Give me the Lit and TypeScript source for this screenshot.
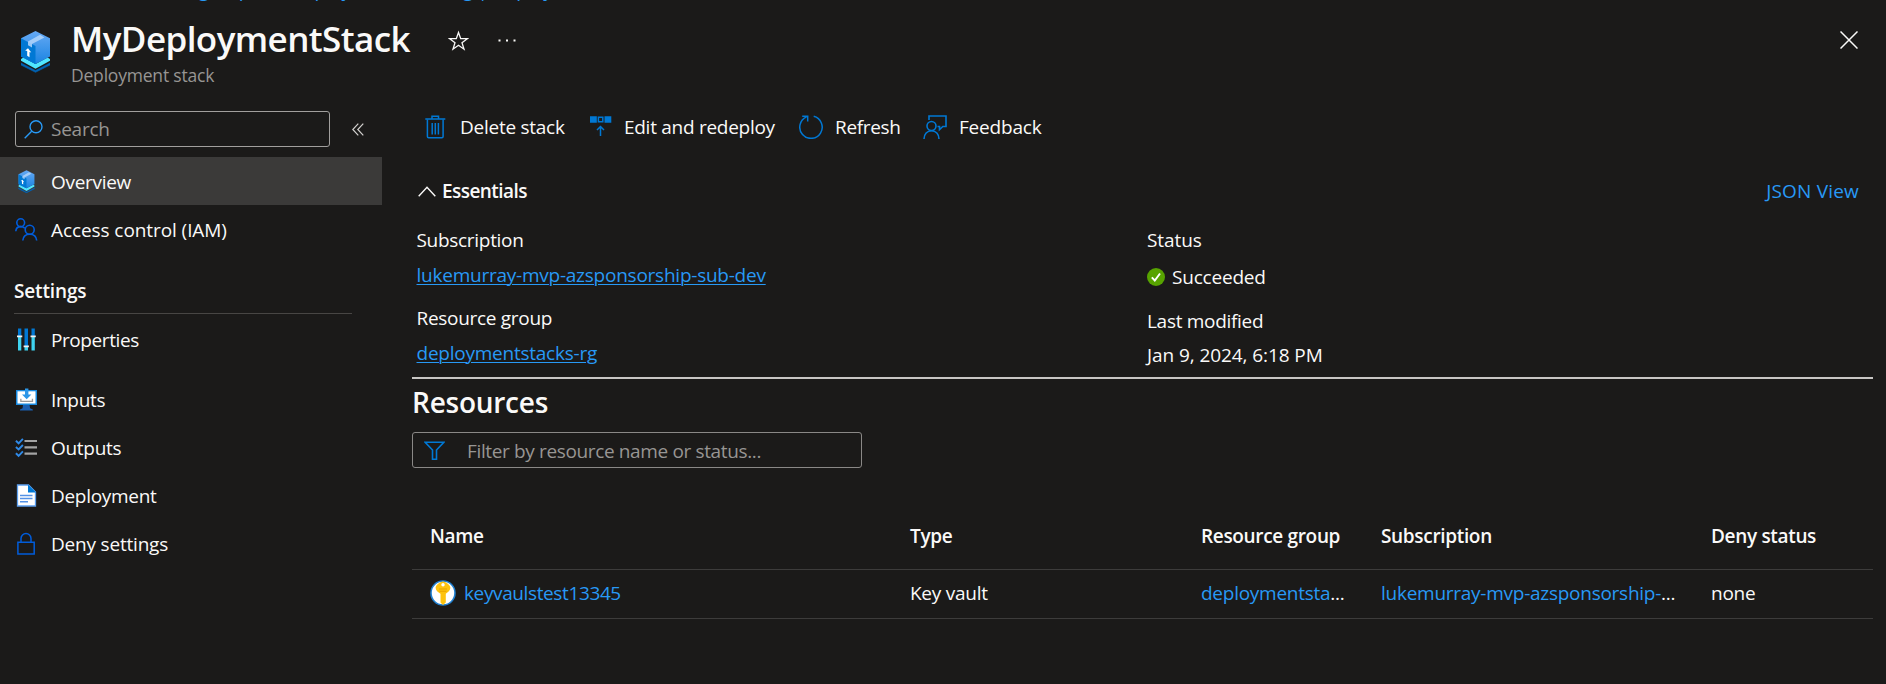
import { LitElement, html, svg, css } from "lit";
import { customElement } from "lit/decorators.js";

const stack = svg`
  <defs>
    <linearGradient id="cube" x1="0" y1="0" x2="0" y2="1"><stop offset="0" stop-color="#66a9f4"/><stop offset="1" stop-color="#1a84e2"/></linearGradient>
  </defs>
  <path d="M0 32 14.5 39.5 29 32v2L14.5 41.3 0 34z" fill="#0063b4" stroke="#0063b4" stroke-width=".6"/>
  <path d="M0 28 2.4 26.500 14.5 33 26.6 26.500 29 28v1.800L14.5 37.800 0 29.800z" fill="#50e6ff"/>
  <path d="M14.5 0 29 7.3V25.5L14.5 33 0 25.5V7.3z" fill="url(#cube)"/>
  <path d="M0 7.3 14.5 15V33L0 25.5z" fill="#0078d4"/>
  <path d="M7 10.4 19 3.8 23.4 6.4 11 13v3.4L7 14.2z" fill="#b3d5fa" opacity=".85"/>
  <path d="M7 17.2 10.3 21.6 8.5 21v5.2L6.2 24.8V20L4.2 19.6z" fill="#fff"/>`;

const icons = {
  people: svg`<g fill="none" stroke="#015cda" stroke-width="1.6"><circle cx="5.7" cy="4.7" r="3.9"/><path d="M.8 13.2C1 10.2 3 8.6 5.7 8.6c1.8 0 3.2.6 4.2 1.7"/><circle cx="14.7" cy="11.7" r="4.5"/><path d="M7.8 22.5c.3-4 3-6.3 6.9-6.3s6.7 2.300 7 6.300"/></g>`,
  sliders: svg`<path d="M3 .5h3.3v8H3zM9.5.5h3.5v17.5H9.5zM16.5.5h3.3v8h-3.3z" fill="#0078d4"/><path d="M3 8.5h3.3v14H3zM9.5 18.5h3.5v4H9.5zM16.5 8.5h3.3v14h-3.3z" fill="#3fd3ef"/><path d="M2 7.5h5.3v1.7H2zM8.6 17.5h5.3v1.7H8.6zM15.5 7.5h5.3v1.7h-5.3z" fill="#f2f2f2"/>`,
  input: svg`<path d="M8 16.5h6.5l.6 3.8 2.7 1.2v.9H5v-.9l2.6-1.2z" fill="#1b5fb0"/><path d="M1 2h21v15H1z" fill="#198ae0"/><path d="M2.5 3.3h18v12.2h-18z" fill="#fff"/><path d="M10 .6h3.4v6h3L11.7 11.3 7 6.6h3z" fill="#2b96e8"/><path d="M5.2 10.7h1.3v2h10.3v-2h1.3v3.4H5.2z" fill="#999"/>`,
  checklist: svg`<path d="M9.5 5h12.5M9.5 11.3h12.5M9.5 17.7h12.5" stroke="#a3a3a3" stroke-width="2.2"/><path d="m.9 4.8 2.7 2.5 4.3-4.5M.9 11 3.6 13.5 7.9 9M.9 17.3l2.7 2.5 4.3-4.5" fill="none" stroke="#2f8ae8" stroke-width="1.9"/>`,
  doc: svg`<path d="M2.5 1h11l7 7v14h-18z" fill="#fff" stroke="#5ea0ef" stroke-width="1.3"/><path d="M13 .5 21 8.5h-8z" fill="#0078d4"/><path d="M5 11.4h12.5M5 14.5h12.5M5 17.7h8" stroke="#5492e6" stroke-width="1.5"/>`,
  lock: svg`<path d="M2.9 10.3h16.3v11.6H2.9zM6 10V6.5a5 5 0 0 1 10 0V10" fill="none" stroke="#015cda" stroke-width="1.5"/>`,
  trash: svg`<g fill="none" stroke="#0078d4"><path d="M3.4 4.5v17a1.2 1.2 0 0 0 1.2 1.2h13.3a1.2 1.2 0 0 0 1.2-1.2V4.5" stroke-width="1.5"/><path d="M1.3 4h20M8 3.5V1.2h6.5v2.3" stroke-width="1.5"/><path d="M8.2 8v11.5M11.3 8v11.5M14.4 8v11.5" stroke-width="1.5"/></g>`,
  redeploy: svg`<path d="M0 1.3h6.8v6.5H0zM14.5 1.3h6.8v6.5h-6.8z" fill="#0078d4"/><path d="M8.4 2.300h4.400v4.500H8.400z" fill="none" stroke="#0078d4" stroke-width="1.5"/><path d="M10.5 21V12M7 15l3.5-3.5L14 15" fill="none" stroke="#0078d4" stroke-width="1.5"/>`,
  refresh: svg`<path d="M14.7 1.3A11.2 11.2 0 1 1 7.5 1.9M3.2 1.2h5.500v5.300" fill="none" stroke="#0078d4" stroke-width="1.5"/>`,
  feedback: svg`<g fill="none" stroke="#0078d4" stroke-width="1.6"><path d="M6 5V1h17v10.5h-3.2l-3.3 3.2v-3.2h-2"/><circle cx="8.5" cy="11" r="4.5"/><path d="M1 24c0-5 3.2-8.3 7.5-8.3s7.5 3.300 7.500 8.300"/></g>`,
};

type Nav = { label: string; icon: unknown; active?: boolean; box?: string; cls?: string };

const TOP: Nav[] = [
  { label: "Overview", icon: stack, active: true, box: "-5.5 -.5 40 42", cls: "t3" },
  { label: "Access control (IAM)", icon: icons.people, cls: "t1" },
];
const SETTINGS: Nav[] = [
  { label: "Properties", icon: icons.sliders, cls: "t4 first" },
  { label: "Inputs", icon: icons.input, cls: "t3" },
  { label: "Outputs", icon: icons.checklist, cls: "t3" },
  { label: "Deployment", icon: icons.doc, cls: "t3" },
  { label: "Deny settings", icon: icons.lock, cls: "t2" },
];

@customElement("app-root")
export class AppRoot extends LitElement {
  static styles = css`
    :host {
      display: block; height: 684px; overflow: hidden; background: #1b1a19; color: #faf9f8;
      font: 19px/24px "Open Sans", "Noto Sans", sans-serif; white-space: nowrap;
    }
    * { box-sizing: border-box; }
    svg { display: block; flex: none; }
    a { color: #2899f5; text-decoration: none; }
    .t1 { letter-spacing: -0.08px; }
    .t2 { letter-spacing: -0.2px; }
    .t3 { letter-spacing: -0.3px; }
    .t4 { letter-spacing: -0.42px; }
    .crumbs { height: 14px; overflow: hidden; }
    .crumbs div { display: flex; margin: -22px 0 0 114px; gap: 34px; letter-spacing: -0.27px; }
    header { display: flex; height: 97px; padding-left: 21px; }
    header .logo { margin: 17px 21px 0 0; }
    .heading { padding-top: 1px; }
    h1 { margin: 0; font-size: 35px; line-height: 48px; font-weight: 600; letter-spacing: -0.58px; }
    .sub { font-size: 17.5px; letter-spacing: -0.2px; color: #979593; }
    .star { margin: 16px 0 0 38px; }
    .dots { margin: 25px 0 0 29px; }
    .close { margin: 17px 28px 0 auto; }
    .body { display: flex; }
    nav { width: 382px; flex: none; }
    .searchrow { display: flex; align-items: center; height: 36px; margin: 0 0 10px 15px; }
    .search {
      display: flex; align-items: center; width: 315px; height: 36px; padding-left: 8px; gap: 8px;
      border: 1px solid #a19f9d; border-radius: 3px; color: #979593;
    }
    .search span { letter-spacing: -0.25px; padding-bottom: 1px; }
    .collapse { margin-left: 22px; }
    .item { display: flex; align-items: center; height: 48px; padding-left: 15px; gap: 13px; }
    .item span { padding-top: 2px; }
    .item.active { background: #3b3a39; }
    .item.first { margin-bottom: 12px; }
    .group { margin: 26px 0 1px 14px; width: 338px; height: 35px; border-bottom: 1px solid #484644; font-weight: 600; letter-spacing: -0.15px; }
    main { flex: 1; padding: 4px 13px 0 30px; min-width: 0; }
    .bar { display: flex; height: 24px; }
    .bar div { display: flex; }
    .bar span { margin-left: 12px; }
    .bar .b1 { margin-left: 12px; width: 166px; }
    .bar .b2 { width: 209px; letter-spacing: -0.28px; }
    .bar .b2 span { margin-left: 10px; letter-spacing: inherit; }
    .bar .b3 { width: 124px; }
    .bar .b1 span { letter-spacing: -0.26px; }
    .bar .b3 span { letter-spacing: -0.32px; }
    .ess { display: flex; align-items: center; margin-top: 40px; padding: 0 14px 0 6px; height: 24px; }
    .ess span { margin-left: 6px; font-weight: 600; letter-spacing: -0.55px; }
    .ess a { margin-left: auto; letter-spacing: 0.2px; }
    .props { display: grid; grid-template-columns: 730.5px 1fr; padding: 25px 0 0 4.5px; height: 176px; border-bottom: 2px solid #c8c6c4; }
    .props div { display: flex; flex-direction: column; align-items: flex-start; }
    .props a { text-decoration: underline; text-decoration-thickness: 1px; text-underline-offset: 2px; margin: 11px 0 19px; letter-spacing: -0.24px; }
    .ok { display: flex; align-items: center; gap: 7px; margin: 13px 0 20px; }
    .date { margin-top: 10px; }
    h2 { margin: 4px 0 11px; font-size: 28px; line-height: 38px; font-weight: 600; letter-spacing: -0.25px; }
    .filter {
      display: flex; align-items: center; width: 450px; height: 36px; padding-left: 11px; gap: 22px;
      border: 1px solid #8a8886; border-radius: 3px; color: #979593; letter-spacing: -0.36px;
    }
    .filter span { padding-top: 2px; }
    .row { display: grid; grid-template-columns: 480px 291px 180px 330px 1fr; padding-left: 18px; border-bottom: 1px solid #3d3c3b; }
    .head { margin-top: 44px; padding-top: 12px; height: 58px; font-weight: 600; letter-spacing: -0.33px; }
    .data { padding-top: 11px; height: 49px; letter-spacing: -0.26px; }
    .name { display: flex; align-items: center; height: 24px; gap: 8px; letter-spacing: -0.38px; }
  `;

  private item(n: Nav) {
    return html`<div class="item ${n.active ? "active" : ""} ${n.cls ?? ""}">
      <svg width="23" height="23" viewBox=${n.box ?? "0 0 23 23"}>${n.icon}</svg><span>${n.label}</span>
    </div>`;
  }

  private action(cls: string, icon: unknown, label: string) {
    return html`<div class=${cls}><svg width="24" height="24" viewBox="0 0 24 24">${icon}</svg><span class="t2">${label}</span></div>`;
  }

  render() {
    return html`
      <div class="crumbs"><div><a>Resource groups</a><a>deploymentstacks-rg | Deployment stacks</a></div></div>
      <header>
        <svg class="logo" width="29" height="42" viewBox="0 0 29 42">${stack}</svg>
        <div class="heading"><h1>MyDeploymentStack</h1><div class="sub">Deployment stack</div></div>
        <svg class="star" width="21" height="22" viewBox="0 0 21 22"><path d="m10.5 2.5 2.2 6.2h6.6l-5.3 4 2 6.5-5.5-4-5.5 4 2-6.5-5.3-4h6.6z" fill="none" stroke="#faf9f8" stroke-width="1.3"/></svg>
        <svg class="dots" width="18" height="3" viewBox="0 0 18 3" fill="#faf9f8"><path d="M.5.5h2v2h-2zM8 .5h2v2H8zM15.5.5h2v2h-2z"/></svg>
        <svg class="close" width="18" height="18" viewBox="0 0 18 18"><path d="m.5.5 17 17M17.5.5l-17 17" stroke="#faf9f8" stroke-width="1.5"/></svg>
      </header>
      <div class="body">
        <nav>
          <div class="searchrow">
            <div class="search">
              <svg width="19" height="19" viewBox="0 0 19 19" fill="none" stroke="#2899f5" stroke-width="1.4"><circle cx="12" cy="6.8" r="6"/><path d="M7.7 11.2.7 18.3"/></svg>
              <span>Search</span>
            </div>
            <svg class="collapse" width="12" height="13" viewBox="0 0 12 13" fill="none" stroke="#d2d0ce" stroke-width="1.2"><path d="M6.3.7.8 6.5l5.5 5.8M11.3.7 5.8 6.5l5.5 5.8"/></svg>
          </div>
          ${TOP.map((n) => this.item(n))}
          <div class="group">Settings</div>
          ${SETTINGS.map((n) => this.item(n))}
        </nav>
        <main>
          <div class="bar">
            ${this.action("b1", icons.trash, "Delete stack")}
            ${this.action("b2", icons.redeploy, "Edit and redeploy")}
            ${this.action("b3", icons.refresh, "Refresh")}
            ${this.action("b4", icons.feedback, "Feedback")}
          </div>
          <div class="ess">
            <svg width="18" height="12" viewBox="0 0 18 12"><path d="M.7 11.300 9 2.300 17.300 11.300" fill="none" stroke="#faf9f8" stroke-width="1.4"/></svg>
            <span>Essentials</span><a>JSON View</a>
          </div>
          <div class="props">
            <div>
              <span class="t3">Subscription</span><a>lukemurray-mvp-azsponsorship-sub-dev</a>
              <span class="t3">Resource group</span><a>deploymentstacks-rg</a>
            </div>
            <div>
              <span class="t1">Status</span>
              <span class="ok t2"><svg width="18" height="18" viewBox="0 0 18 18"><circle cx="9" cy="9" r="9" fill="#57a300"/><path d="m4.8 9.3 3 3.2 5.2-7" fill="none" stroke="#fff" stroke-width="1.9"/></svg>Succeeded</span>
              <span class="t3">Last modified</span><span class="date t1">Jan 9, 2024, 6:18 PM</span>
            </div>
          </div>
          <h2>Resources</h2>
          <div class="filter">
            <svg width="21" height="19" viewBox="0 0 21 19"><path d="M1.2 1.3h18.6L12.5 9v9.2h-4V9z" fill="none" stroke="#0078d4" stroke-width="1.6"/></svg>
            <span>Filter by resource name or status...</span>
          </div>
          <div class="row head"><span>Name</span><span>Type</span><span>Resource group</span><span>Subscription</span><span>Deny status</span></div>
          <div class="row data">
            <span class="name"><svg width="26" height="26" viewBox="0 0 26 26"><circle cx="13" cy="13" r="12" fill="#fff" stroke="#1f7fd0" stroke-width="1.6"/><path d="M13 1.5c2.2 0 7.400 3.500 7.400 6.200 0 2.600-2.500 4.500-4.600 6.100v8.700L13 25l-2.500-2.5v-8.7C8 12.200 5.600 10.300 5.600 7.700 5.600 5 10.8 1.5 13 1.5z" fill="#fdc30f"/><path d="M9 9h8M9.5 11.3h7" stroke="#e8a400" stroke-width="1.1"/><circle cx="13" cy="4.7" r="1.7" fill="#fff"/></svg><a>keyvaulstest13345</a></span>
            <span>Key vault</span>
            <span><a>deploymentsta</a>...</span>
            <span><a>lukemurray-mvp-azsponsorship-</a>...</span>
            <span>none</span>
          </div>
        </main>
      </div>`;
  }
}
